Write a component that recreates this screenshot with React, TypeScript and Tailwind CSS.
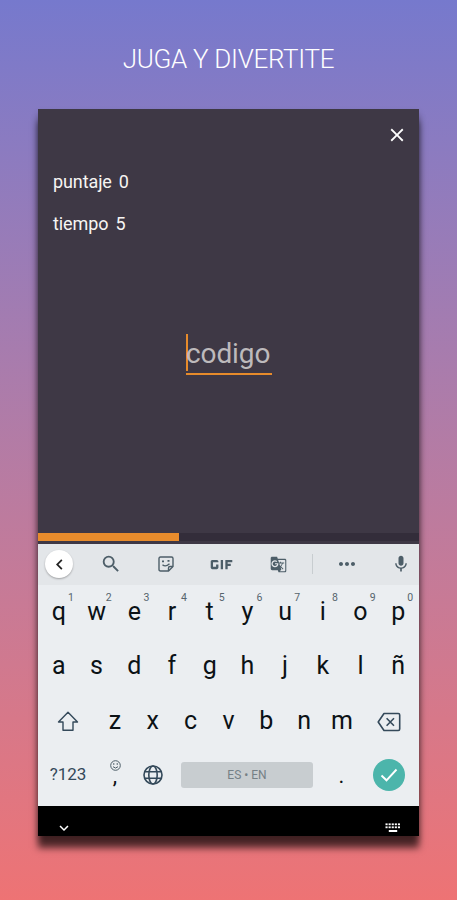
import type { ReactNode } from 'react';
import {
  MdClose,
  MdSearch,
  MdGif,
  MdGTranslate,
  MdMic,
  MdExpandMore,
  MdChevronLeft,
  MdMoreHoriz,
} from 'react-icons/md';

const topRow = ['q', 'w', 'e', 'r', 't', 'y', 'u', 'i', 'o', 'p'];
const middleRow = ['a', 's', 'd', 'f', 'g', 'h', 'j', 'k', 'l', 'ñ'];
const bottomRow = ['z', 'x', 'c', 'v', 'b', 'n', 'm'];

function StickerIcon() {
  return (
    <svg width="16" height="16" viewBox="0 0 16 16" fill="none" stroke="#4d5e68" strokeWidth="1.4">
      <path d="M2.5 1H13.5Q15 1 15 2.5V10.5L10.5 15H2.5Q1 15 1 13.5V2.5Q1 1 2.5 1Z" />
      <path d="M10.5 15V12Q10.5 10.5 12 10.5H15" />
      <path d="M4.5 8.7Q7.5 11.5 11.5 7.7" />
      <path d="M4 5.4H6M9.5 4.9H11.5" strokeWidth="1.9" />
    </svg>
  );
}

function ShiftIcon() {
  return (
    <svg width="22" height="21" viewBox="0 0 22 21" fill="none" stroke="#34495a" strokeWidth="1.4" strokeLinejoin="round">
      <path d="M11 1.2L20.5 11H16V19.3H6V11H1.5Z" />
    </svg>
  );
}

function BackspaceIcon() {
  return (
    <svg width="24" height="20" viewBox="0 0 24 20" fill="none" stroke="#34495a" strokeWidth="1.6" strokeLinejoin="round">
      <path d="M7 1.5H21.3Q22.7 1.5 22.7 3V17Q22.7 18.5 21.3 18.5H7L1.2 10Z" />
      <path d="M9.6 6.3L17 13.7M17 6.3L9.6 13.7" />
    </svg>
  );
}

function SmileIcon() {
  return (
    <svg width="11" height="11" viewBox="0 0 11 11" fill="none" stroke="#4d5e68" strokeWidth="1">
      <circle cx="5.5" cy="5.5" r="4.8" />
      <path d="M3 6.7Q5.5 9.4 8 6.7" />
      <circle cx="3.8" cy="4" r="0.4" />
      <circle cx="7.2" cy="4" r="0.4" />
    </svg>
  );
}

function GlobeIcon() {
  return (
    <svg width="20" height="20" viewBox="0 0 20 20" fill="none" stroke="#34495a" strokeWidth="1.6">
      <circle cx="10" cy="10" r="9" />
      <ellipse cx="10" cy="10" rx="4.2" ry="9" />
      <path d="M1.8 6.8H18.2M1.8 13.2H18.2" />
    </svg>
  );
}

function KeyboardIcon() {
  return (
    <svg width="16" height="10" viewBox="0 0 16 10" fill="#fff">
      {[0, 1, 2, 3, 4].map((col) => (
        <g key={col}>
          <rect x={0.5 + col * 3.1} y="0.4" width="2.1" height="1.8" />
          <rect x={0.5 + col * 3.1} y="3.4" width="2.1" height="1.8" />
        </g>
      ))}
      <rect x="3.8" y="7" width="8.4" height="2" />
    </svg>
  );
}

function Key({ children, hint }: { children: ReactNode; hint?: number }) {
  return (
    <div className="relative flex h-full flex-1 items-center justify-center pb-[2px] text-[25px] leading-none text-[#0b1216]">
      {children}
      {hint !== undefined && (
        <span className="absolute top-[8px] left-[28px] text-[10.5px] leading-none text-[#56646d]">{hint}</span>
      )}
    </div>
  );
}

export default function App() {
  return (
    <main className="flex h-[900px] w-[457px] flex-col overflow-hidden bg-linear-to-b from-[#7679cd] to-[#ee7374] font-['Roboto',sans-serif]">
      <h1 className="mt-[43px] h-[66px] text-center text-[26px] leading-[32px] font-light tracking-[-0.3px] whitespace-nowrap text-white">
        JUGA Y DIVERTITE
      </h1>
      <section className="ml-[38px] flex h-[727px] w-[381px] shrink-0 flex-col bg-[#3e3845] shadow-[0_12px_7px_0px_rgba(0,0,0,0.65),0_4px_6px_rgba(0,0,0,0.25)]">
        <div className="flex h-[424px] flex-col">
          <div className="flex h-[54px] justify-end pt-[15px] pr-[11px]">
            <MdClose size={22} color="#fff" />
          </div>
          <p className="flex gap-[7px] pl-[15px] text-[18px] leading-[38px] tracking-[-0.1px] text-[#f7f5f3]">
            <span>puntaje</span>
            <span>0</span>
          </p>
          <p className="mt-[4px] flex gap-[7px] pl-[15px] text-[18px] leading-[38px] tracking-[-0.1px] text-[#f7f5f3]">
            <span>tiempo</span>
            <span>5</span>
          </p>
          <div className="mt-[91px] ml-[148px] h-[41px] w-[85.5px] border-b-2 border-[#e78b2b]">
            <div className="h-[37px] border-l-2 border-[#e78b2b] text-[28px] leading-[40px] text-[#bdbabc]">
              <span className="-ml-[2px] tracking-[-0.1px]">codigo</span>
            </div>
          </div>
        </div>
        <div className="h-[8px] bg-[#332d3a]">
          <div className="h-full w-[141px] bg-[#e88c2c]" />
        </div>
        <div className="h-[3px]" />
        <div className="h-[262px] bg-[#ebeef1]">
          <div className="flex h-[41px] items-center bg-[#e3e6e9] pb-px text-[#4d5e68]">
            <span className="ml-[7px] flex size-[28px] items-center justify-center rounded-full bg-white shadow-[0_1px_2px_rgba(0,0,0,0.3)]">
              <MdChevronLeft size={21} color="#222" />
            </span>
            <MdSearch size={22} className="ml-[27px]" />
            <span className="ml-[36px]"><StickerIcon /></span>
            <MdGif size={37} className="ml-[29px]" />
            <MdGTranslate size={17} className="ml-[30px]" />
            <span className="ml-[25px] h-[20px] w-px bg-[#c8cdd0]" />
            <MdMoreHoriz size={24} className="ml-[22px]" />
            <MdMic size={20} className="ml-[32px]" />
          </div>
          <div className="flex h-[54.5px] px-[2px]">
            {topRow.map((letter, i) => (
              <Key key={letter} hint={(i + 1) % 10}>{letter}</Key>
            ))}
          </div>
          <div className="flex h-[54.5px] px-[2px]">
            {middleRow.map((letter) => (
              <Key key={letter}>{letter}</Key>
            ))}
          </div>
          <div className="flex h-[54.5px] px-[2px]">
            <div className="flex w-[56px] items-center justify-center"><ShiftIcon /></div>
            {bottomRow.map((letter) => (
              <Key key={letter}>{letter}</Key>
            ))}
            <div className="flex w-[56px] items-center justify-center pt-px"><BackspaceIcon /></div>
          </div>
          <div className="flex h-[54px] items-center px-[2px] pb-[2px]">
            <div className="w-[56px] text-center text-[17px] text-[#34495a]">?123</div>
            <div className="flex w-[38px] flex-col items-center pb-[3px]">
              <SmileIcon />
              <span className="mt-[-5px] text-[22px] leading-[20px] text-[#0b1216]">,</span>
            </div>
            <div className="flex w-[37px] justify-center"><GlobeIcon /></div>
            <div className="ml-[10px] flex h-[26px] w-[132px] items-center justify-center rounded-[3px] bg-[#c8cdd0] text-[12px] text-[#758086]">
              ES • EN
            </div>
            <div className="ml-[10px] w-[37px] pt-[2px] text-center text-[22px] leading-[26px] text-[#0b1216]">.</div>
            <div className="ml-[13px] flex size-[32px] items-center justify-center rounded-full bg-[#4cb5ab]">
              <svg width="18" height="14" viewBox="0 0 18 14" fill="none" stroke="#fff" strokeWidth="1.9">
                <path d="M1.5 7.5L6.5 12.3L16.5 1.5" />
              </svg>
            </div>
          </div>
        </div>
        <div className="flex h-[30px] items-center justify-between bg-black pt-[14px] pr-[18px] pl-[17px] text-white">
          <MdExpandMore size={18} />
          <KeyboardIcon />
        </div>
      </section>
    </main>
  );
}
